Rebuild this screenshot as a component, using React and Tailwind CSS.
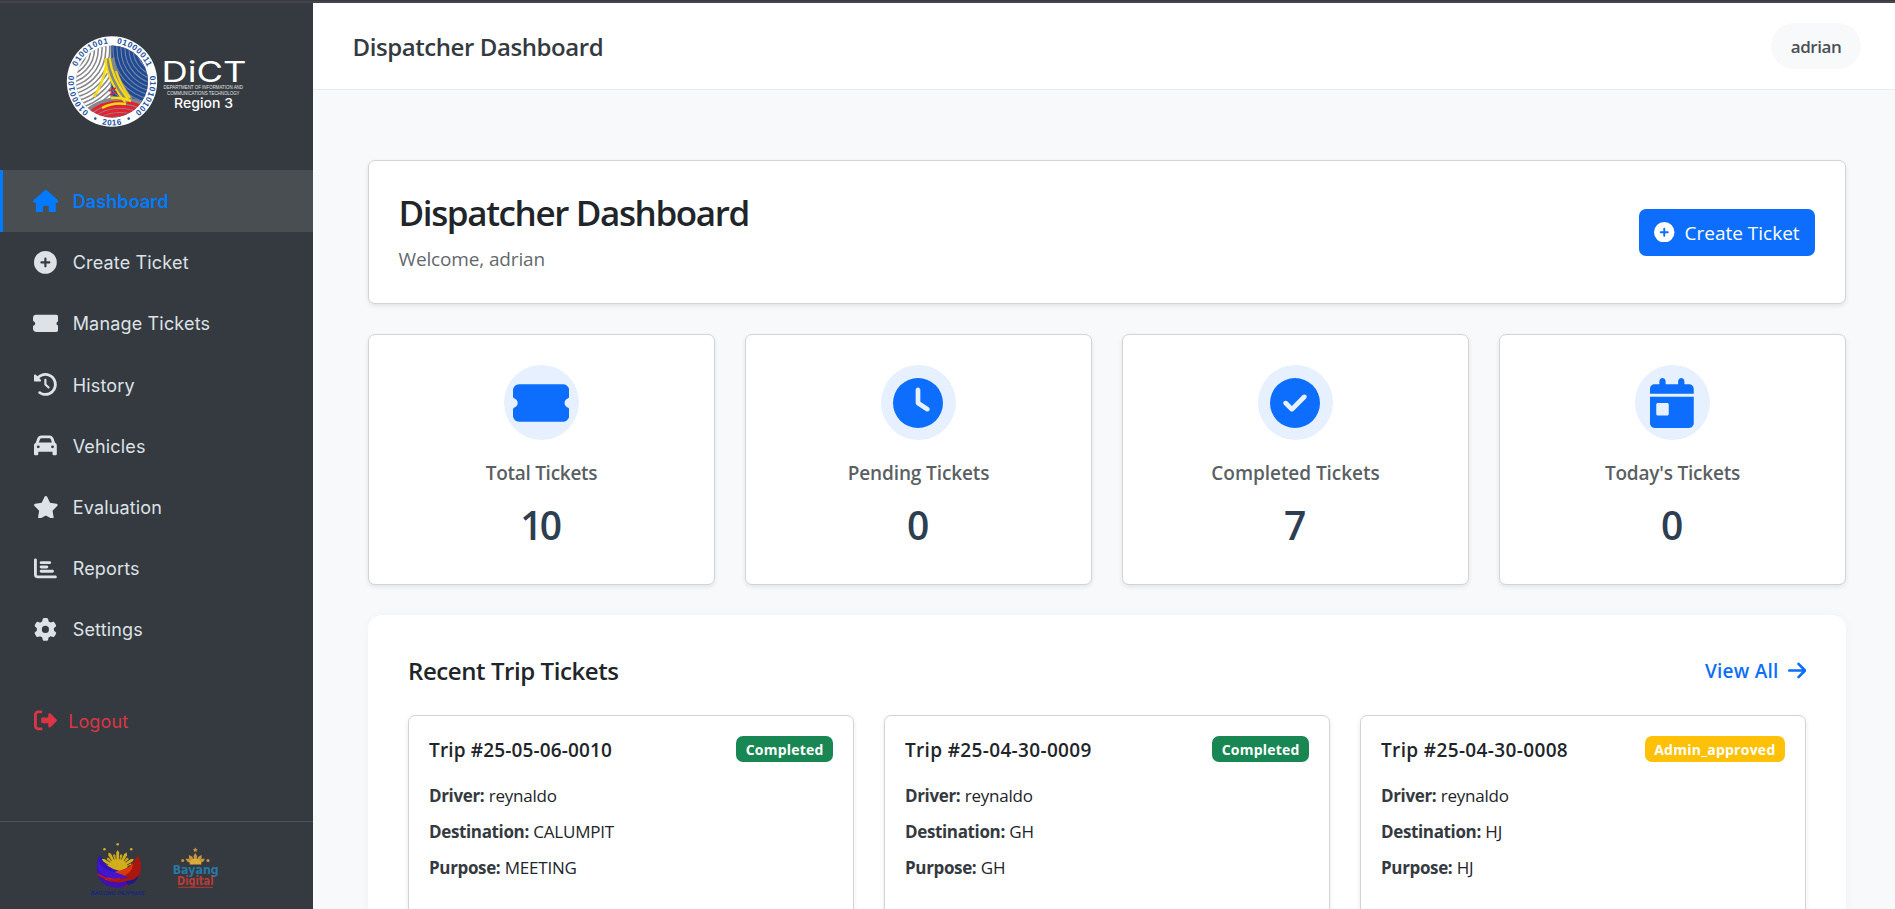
import React from "react";
import {
  FaHouse,
  FaCirclePlus,
  FaTicketSimple,
  FaClockRotateLeft,
  FaCar,
  FaStar,
  FaChartBar,
  FaGear,
  FaRightFromBracket,
  FaClock,
  FaCircleCheck,
  FaCalendarDay,
  FaArrowRight,
} from "react-icons/fa6";

const navItems = [
  { label: "Dashboard", Icon: FaHouse, size: "w-[25.7px]", active: true },
  { label: "Create Ticket", Icon: FaCirclePlus, size: "w-[22.8px]" },
  { label: "Manage Tickets", Icon: FaTicketSimple, size: "w-[25.7px]" },
  { label: "History", Icon: FaClockRotateLeft, size: "w-[22.8px]" },
  { label: "Vehicles", Icon: FaCar, size: "w-[22.8px]" },
  { label: "Evaluation", Icon: FaStar, size: "w-[25.7px]" },
  { label: "Reports", Icon: FaChartBar, size: "w-[22.8px]" },
  { label: "Settings", Icon: FaGear, size: "w-[22.8px]" },
];

const stats = [
  { label: "Total Tickets", value: "10", Icon: FaTicketSimple, size: "w-[56.25px]", track: "tracking-[-0.28px]" },
  { label: "Pending Tickets", value: "0", Icon: FaClock, size: "w-[50px]", track: "tracking-[-0.12px]" },
  { label: "Completed Tickets", value: "7", Icon: FaCircleCheck, size: "w-[50px]", track: "tracking-[-0.05px]" },
  { label: "Today's Tickets", value: "0", Icon: FaCalendarDay, size: "w-[43.75px]", track: "tracking-[-0.2px]" },
];

const trips = [
  { id: "25-05-06-0010", status: "Completed", driver: "reynaldo", destination: "CALUMPIT", purpose: "MEETING", track: "tracking-[0.15px]" },
  { id: "25-04-30-0009", status: "Completed", driver: "reynaldo", destination: "GH", purpose: "GH", track: "tracking-[0.34px]" },
  { id: "25-04-30-0008", status: "Admin_approved", driver: "reynaldo", destination: "HJ", purpose: "HJ", track: "tracking-[0.36px]" },
];

const badgeStyles = {
  Completed: "bg-[#198754] tracking-[0.2px]",
  Admin_approved: "bg-[#ffc107] tracking-[0.25px]",
};

const range = (from, to, step) => {
  const out = [];
  for (let v = from; v <= to; v += step) out.push(v);
  return out;
};

function DictLogo() {
  const ring = { fontFamily: "Liberation Sans", fontWeight: 700, fontSize: 8.2, letterSpacing: 0.6, fill: "#2450a0" };
  return (
    <svg className="h-[92px] w-[190px] overflow-visible" viewBox="66 36 190 92">
      <defs>
        <clipPath id="disc"><circle cx="112" cy="81.5" r="36" /></clipPath>
        <clipPath id="west"><rect x="70" y="40" width="40.5" height="90" /></clipPath>
        <clipPath id="east"><rect x="111.5" y="40" width="50" height="90" /></clipPath>
        <clipPath id="south"><circle cx="120" cy="151" r="54" /></clipPath>
        <path id="cw" d="M112 119.6 A38.1 38.1 0 0 1 112 43.4 A38.1 38.1 0 0 1 112 119.6" />
        <path id="ccw" d="M68 81.5 A44 44 0 0 0 156 81.5" />
      </defs>
      <circle cx="112" cy="81.5" r="45.2" fill="#fff" />
      <g clipPath="url(#disc)" fill="none">
        <rect x="70" y="40" width="90" height="90" fill="#85868a" />
        <g clipPath="url(#west)" stroke="#fff" strokeWidth="2.3">
          {range(2, 78, 3.8).map((r) => <circle key={r} cx="64" cy="49" r={r} />)}
        </g>
        <g clipPath="url(#east)">
          <rect x="111" y="40" width="50" height="90" fill="#1e4a96" />
          <g stroke="#75849f" strokeWidth="1.1">
            {range(3, 78, 4).map((r) => <circle key={r} cx="160" cy="49" r={r} />)}
          </g>
        </g>
        <g clipPath="url(#south)">
          <rect x="70" y="90" width="90" height="40" fill="#85868a" />
          <g stroke="#e8202f" strokeWidth="3.1">
            {range(28, 53, 4.2).map((r) => <circle key={r} cx="120" cy="151" r={r} />)}
          </g>
        </g>
        <path d="M110 58 Q112 78 129 101" stroke="#85868a" strokeWidth="9" />
        <path d="M106 58 V66 Q103 83 94 97" stroke="#f5dc10" strokeWidth="2.4" />
        <path d="M105.5 59 Q107 80 125 102" stroke="#f5dc10" strokeWidth="2.2" />
        <path d="M109.5 58 Q112 78 128 99" stroke="#f5dc10" strokeWidth="2.2" />
        <path d="M116 71 Q120 84 130 98" stroke="#f2d21c" strokeWidth="2.2" />
        <path d="M102 108 Q113 102 126 104 M111 98 Q120 97 131 101" stroke="#f5dc10" strokeWidth="2.4" />
        <path d="M109 91 L116 88 M110 95 L117 92" stroke="#e8202f" strokeWidth="1.4" />
      </g>
      <g style={ring} textAnchor="middle">
        <text><textPath href="#cw" startOffset="19%">01000100</textPath></text>
        <text><textPath href="#cw" startOffset="40%">01001001</textPath></text>
        <text><textPath href="#cw" startOffset="60.5%">01000011</textPath></text>
        <text><textPath href="#cw" startOffset="81.3%">01010100</textPath></text>
        <text><textPath href="#ccw" startOffset="50%">2016</textPath></text>
      </g>
      <circle cx="95.3" cy="118.6" r="1.3" fill="#2450a0" />
      <circle cx="128.7" cy="118.6" r="1.3" fill="#2450a0" />
      <g fill="#fff" style={{ fontFamily: "Inter" }}>
        <text x="161.5" y="82.3" fontSize="28" fontWeight="400" textLength="85" lengthAdjust="spacingAndGlyphs">DiCT</text>
        <g style={{ fontFamily: "Liberation Sans" }} fontSize="5.2" fill="#e4e5e7">
          <text x="163.5" y="88.8" textLength="79.5" lengthAdjust="spacingAndGlyphs">DEPARTMENT OF INFORMATION AND</text>
          <text x="167" y="95.2" textLength="72.5" lengthAdjust="spacingAndGlyphs">COMMUNICATIONS TECHNOLOGY</text>
        </g>
        <text x="174" y="108" fontSize="13" fontWeight="500" textLength="59" lengthAdjust="spacingAndGlyphs">Region 3</text>
      </g>
    </svg>
  );
}

function BagongLogo() {
  return (
    <svg className="h-[60px] w-[58px] overflow-visible" viewBox="89 841 58 60">
      <g fill="#d3ae1c">
        <circle cx="117.7" cy="844.3" r="1.3" />
        <circle cx="104.5" cy="849.3" r="1.3" />
        <circle cx="131.2" cy="849.3" r="1.3" />
        <circle cx="117.7" cy="869.5" r="10.5" />
        {[-58, -29, 0, 29, 58].map((a) => (
          <g key={a} transform={`rotate(${a} 117.7 869)`}>
            <path d="M116.6 862 L116.2 852.5 L117.7 850 L119.2 852.5 L118.8 862 Z" />
            <path d="M115.4 861 L113.9 854 L115.4 855 L116 861 Z M120 861 L121.5 854 L120 855 L119.4 861 Z" />
          </g>
        ))}
      </g>
      <path d="M99.5 855 Q105 868 120 871 Q131 875 133 880 Q126 887 116 887.5 Q97 886 97 868 Q97 860 99.5 855Z" fill="#3512b8" />
      <path d="M137.5 855 Q134 866 120 871 Q106 876 103 881 Q109 888 118 888 Q141 885 141 867 Q141 860 137.5 855Z" fill="#a9150f" />
      <path d="M133 863 Q128 870 117 871 Q108 875 105 880 Q124 880 132 869Z" fill="#dc3a0c" />
      <path d="M98 860 Q102 870 114 872 Q123 874 128 878 L114 879 Q99 877 97.5 866Z" fill="#4016cf" />
      <path d="M99 877 Q114 886 131 880 Q126 888 117 888 Q104 887 99 877Z" fill="#3f12b4" />
      <path d="M98 874 Q108 882 120 879" stroke="#c01418" strokeWidth="2" fill="none" />
      <path d="M126 881 Q134 881 139 875 Q136 884 128 885Z" fill="#191a8c" />
      <text x="90.5" y="894.8" fontSize="5" fontWeight="700" fontStyle="italic" fill="#1a2385" textLength="54" lengthAdjust="spacingAndGlyphs" style={{ fontFamily: "Liberation Sans" }}>BAGONG PILIPINAS</text>
    </svg>
  );
}

function BayangLogo() {
  return (
    <svg className="h-[44px] w-[48px] overflow-visible" viewBox="172 846 48 44">
      <g fill="#c9963d">
        <path d="M195.3 847.5 l.8 1.5 1.6 .2 -1.2 1.1 .3 1.7 -1.5 -.8 -1.5 .8 .3 -1.7 -1.2 -1.1 1.6 -.2Z" />
        <circle cx="182.7" cy="860.5" r="1.5" />
        <circle cx="208" cy="860.5" r="1.5" />
        {[-62, -36, 0, 36, 62].map((a) => (
          <path key={a} transform={`rotate(${a} 195.3 864)`} d="M194.3 862 L193.5 856 L195.3 853 L197.1 856 L196.3 862 Z" />
        ))}
        <path d="M189.5 864.5 A6 6 0 0 1 201.5 864.5Z" fill="#d9ad3a" />
      </g>
      <g style={{ fontFamily: "DejaVu Sans" }} fontWeight="700">
        <text x="172.7" y="874.4" fontSize="12.8" fill="#2878a6" textLength="46" lengthAdjust="spacingAndGlyphs">Bayang</text>
        <text x="177" y="885.4" fontSize="11.8" fill="#b83c38" textLength="36.5" lengthAdjust="spacingAndGlyphs">Digital</text>
      </g>
      <path d="M178 887.3 H213" stroke="#a53431" strokeWidth="1.3" />
    </svg>
  );
}

function Sidebar() {
  return (
    <aside className="flex w-[313px] shrink-0 flex-col bg-[#343a40] font-['Inter',sans-serif] text-[18px] text-[#dee2e6]">
      <div className="h-[167.4px] pt-[33px] pl-[66px]">
        <DictLogo />
      </div>
      <nav className="flex flex-col">
        {navItems.map(({ label, Icon, size, active }) => (
          <a
            key={label}
            className={
              active
                ? "flex h-[61.2px] items-center border-l-[3px] border-[#007bff] bg-[#494e52] pl-[27.5px] font-semibold tracking-[0.1px] text-[#007bff]"
                : "flex h-[61.2px] items-center pl-[30.5px] tracking-[0.17px]"
            }
          >
            <span className="flex w-[30px] justify-center">
              <Icon className={`${size} h-[22.8px]`} />
            </span>
            <span className="ml-[12.2px] pt-px">{label}</span>
          </a>
        ))}
        <a className="mt-[30.4px] flex h-[61.2px] items-center pl-[34.4px] tracking-[0.1px] text-[#dc3545]">
          <FaRightFromBracket className="h-[22.8px] w-[22.8px]" />
          <span className="ml-[11px] pt-px">Logout</span>
        </a>
      </nav>
      <footer className="mt-auto flex h-[88px] items-start border-t border-[#4b5155] pt-[19px] pl-[89px]">
        <BagongLogo />
        <span className="ml-[25px] pt-[5px]">
          <BayangLogo />
        </span>
      </footer>
    </aside>
  );
}

function Field({ name, value }) {
  return (
    <p className="text-[17px] leading-[36.2px] text-[#343a40]">
      <strong className="font-bold tracking-[-0.36px]">{name}:</strong>{" "}
      <span className="tracking-[-0.22px] text-[#212529]">{value}</span>
    </p>
  );
}

const cardShadow = "border border-[#d3d4d5] shadow-[0_2px_5px_rgba(0,0,0,0.09)]";

export default function App() {
  return (
    <div className="flex h-[909px] w-[1895px] flex-col overflow-hidden bg-[#f8f9fb] font-['Open_Sans','Noto_Sans',sans-serif]">
      <div className="h-[3px] shrink-0 border-t border-[#393a45] bg-[#46454b]" />
      <div className="flex min-h-0 flex-1">
        <Sidebar />
        <div className="flex min-w-0 flex-1 flex-col">
          <header className="flex h-[87px] shrink-0 items-center justify-between border-b border-[#e9eaeb] bg-white pr-[34px] pl-[39.5px]">
            <h1 className="pt-[2px] text-[24px] leading-8 font-[550] tracking-[-0.42px] text-[#343a40]">Dispatcher Dashboard</h1>
            <span className="flex h-[46px] w-[90px] items-center justify-center rounded-full bg-[#f8f9fb] pt-px text-[17px] font-semibold tracking-[-0.45px] text-[#495057]">
              adrian
            </span>
          </header>
          <main className="flex flex-col gap-[30px] pt-[70px] pr-[49px] pl-[55px]">
            <section className={`flex h-[144px] items-center justify-between rounded-[7px] bg-white pr-[30px] pl-[29.5px] ${cardShadow}`}>
              <div>
                <h2 className="text-[35px] leading-[42px] font-[570] tracking-[-1.38px] text-[#212529]">Dispatcher Dashboard</h2>
                <p className="mt-[11px] text-[19px] leading-7 tracking-[-0.14px] text-[#63686d]">Welcome, adrian</p>
              </div>
              <button className="flex h-[47px] w-[176px] items-center gap-[10px] rounded-[7px] bg-[#0d6efd] pl-[15px] text-[19px] text-white">
                <FaCirclePlus className="h-[20.5px] w-[20.5px]" />
                <span className="pt-[2px]">Create Ticket</span>
              </button>
            </section>
            <section className="grid grid-cols-4 gap-[30px]">
              {stats.map(({ label, value, Icon, size, track }) => (
                <div key={label} className={`flex h-[251px] flex-col items-center rounded-[7px] bg-white pt-[30px] ${cardShadow}`}>
                  <span className="flex h-[75px] w-[75px] items-center justify-center rounded-full bg-[#e6f0ff]">
                    <Icon className={`${size} mt-px mr-px h-[50px] text-[#0d6efd]`} />
                  </span>
                  <span className={`mt-[18.5px] text-[19px] leading-7 font-semibold text-[#5a5f63] ${track}`}>{label}</span>
                  <span className="mt-[15.5px] pr-[3.5px] text-[39px] leading-[46px] font-semibold tracking-[-2.8px] text-[#2c3e50]">{value}</span>
                </div>
              ))}
            </section>
            <section className="h-[400px] rounded-[14px] bg-white px-10 pt-10 shadow-[0_0_12px_rgba(0,0,0,0.035)]">
              <div className="flex h-8 items-center justify-between">
                <h3 className="text-[24px] font-[550] tracking-[-0.42px] text-[#212529]">Recent Trip Tickets</h3>
                <a className="flex items-center gap-[9px] text-[19px] font-semibold tracking-[0.25px] text-[#0d6efd]">
                  View All
                  <FaArrowRight className="mb-px h-[21px] w-[18.4px]" />
                </a>
              </div>
              <div className="mt-7 grid grid-cols-3 gap-[30px]">
                {trips.map((trip) => (
                  <article key={trip.id} className={`h-[260px] rounded-[7px] bg-white p-5 ${cardShadow}`}>
                    <div className="flex h-[26px] items-center justify-between">
                      <h4 className={`pt-[2px] text-[19px] font-[550] text-[#212529] ${trip.track}`}>Trip #{trip.id}</h4>
                      <span className={`flex h-[26px] items-center rounded-[7px] px-[9.5px] text-[14px] font-bold text-white ${badgeStyles[trip.status]}`}>
                        {trip.status}
                      </span>
                    </div>
                    <div className="mt-[16px]">
                      <Field name="Driver" value={trip.driver} />
                      <Field name="Destination" value={trip.destination} />
                      <Field name="Purpose" value={trip.purpose} />
                    </div>
                  </article>
                ))}
              </div>
            </section>
          </main>
        </div>
      </div>
    </div>
  );
}
